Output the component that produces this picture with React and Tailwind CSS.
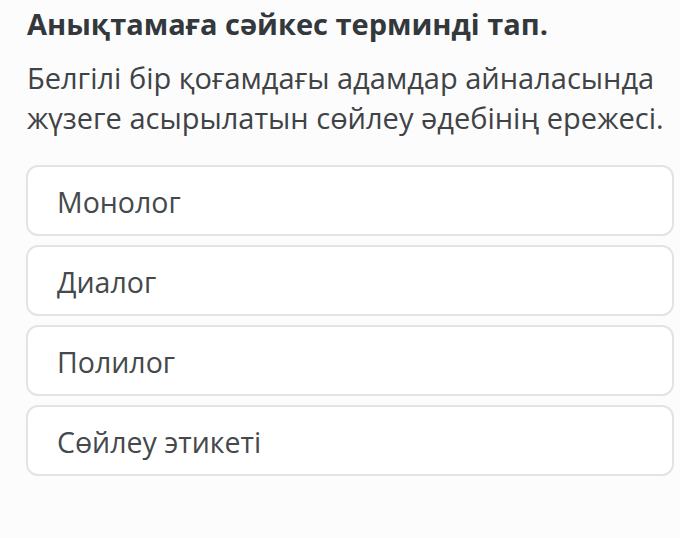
export default function App() {
  const options = ['Монолог', 'Диалог', 'Полилог', 'Сөйлеу этикеті'];
  return (
    <div className="w-[680px] h-[538px] bg-[#fcfcfc] pl-[26px] pt-[4px] font-['Open_Sans',sans-serif] text-[#3b3f42]">
      <h1 className="pl-[1px] text-[29px] leading-[40px] font-bold text-[#33383c]">Анықтамаға сәйкес терминді тап.</h1>
      <p className="pl-[1px] mt-[14px] text-[29px] leading-[40px] text-[#3f4346]">
        Белгілі бір қоғамдағы адамдар айналасында жүзеге асырылатын сөйлеу әдебінің ережесі.
      </p>
      <div className="mt-[27px] flex flex-col gap-[9px] w-[648px]">
        {options.map((o) => (
          <div key={o} className="h-[71px] flex items-center pt-[3px] pl-[29px] border-2 border-[#e2e3e3] rounded-[12px] bg-white text-[28.5px] text-[#45494b]">
            {o}
          </div>
        ))}
      </div>
    </div>
  );
}
